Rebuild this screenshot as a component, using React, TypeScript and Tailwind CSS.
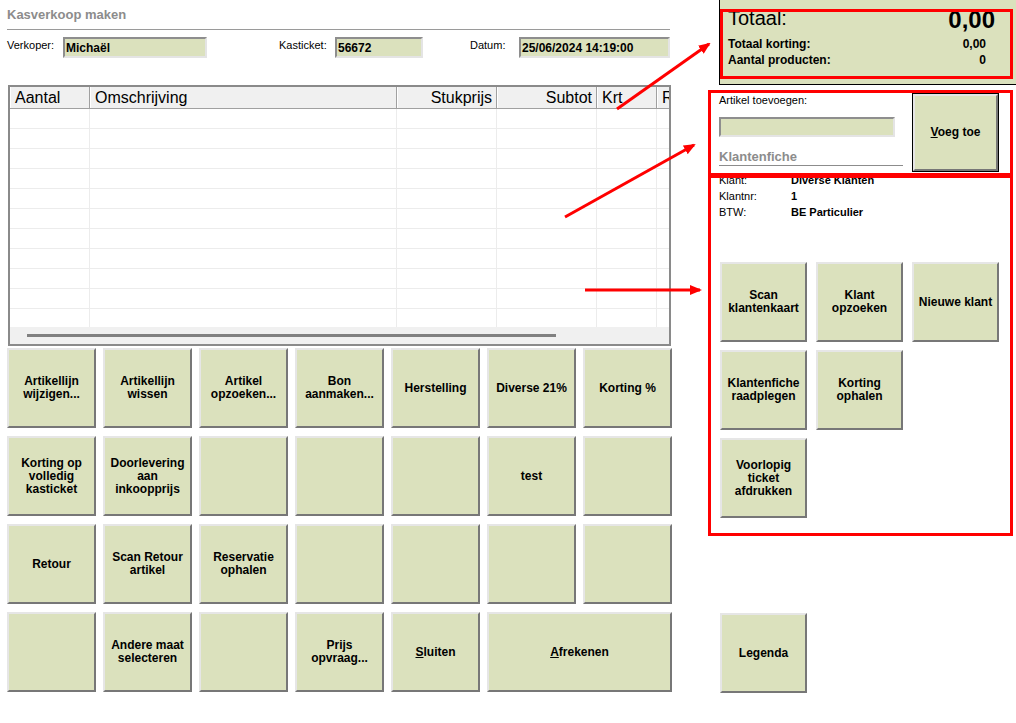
import React from 'react';

const font = "font-['Liberation_Sans','Arial',sans-serif]";

const bevel =
  'flex items-center justify-center text-center bg-[#dbe1bd] border-2 border-t-[#e6e6e6] border-l-[#e6e6e6] border-r-[#777777] border-b-[#777777] text-[12px] font-bold leading-[13px] text-black';

const sunken =
  'flex items-center bg-[#dbe1bd] border-2 border-t-[#8e8e8e] border-l-[#8e8e8e] border-r-[#e4e4e4] border-b-[#e4e4e4] text-[12px] font-bold text-black pl-[1px]';

type Btn = { label: React.ReactNode; span?: boolean };

const leftButtons: Btn[] = [
  { label: 'Artikellijn\nwijzigen...' },
  { label: 'Artikellijn\nwissen' },
  { label: 'Artikel\nopzoeken...' },
  { label: 'Bon\naanmaken...' },
  { label: 'Herstelling' },
  { label: 'Diverse 21%' },
  { label: 'Korting %' },
  { label: 'Korting op\nvolledig\nkasticket' },
  { label: 'Doorlevering\naan\ninkoopprijs' },
  { label: '' },
  { label: '' },
  { label: '' },
  { label: 'test' },
  { label: '' },
  { label: 'Retour' },
  { label: 'Scan Retour\nartikel' },
  { label: 'Reservatie\nophalen' },
  { label: '' },
  { label: '' },
  { label: '' },
  { label: '' },
  { label: '' },
  { label: 'Andere maat\nselecteren' },
  { label: '' },
  { label: 'Prijs\nopvraag...' },
  { label: <><span className="underline">S</span>luiten</> },
  { label: <><span className="underline">A</span>frekenen</>, span: true },
];

// null = empty slot in the grid
const rightButtons: (string | null)[] = [
  'Scan\nklantenkaart',
  'Klant\nopzoeken',
  'Nieuwe klant',
  'Klantenfiche\nraadplegen',
  'Korting\nophalen',
  null,
  'Voorlopig\nticket\nafdrukken',
];

const columns = [
  { name: 'Aantal', w: 'w-[80px]', align: 'justify-start pl-[4px]' },
  { name: 'Omschrijving', w: 'w-[307px]', align: 'justify-start pl-[4px]' },
  { name: 'Stukprijs', w: 'w-[100px]', align: 'justify-end pr-[4px]' },
  { name: 'Subtot', w: 'w-[100px]', align: 'justify-end pr-[4px]' },
  { name: 'Krt', w: 'w-[60px]', align: 'justify-start pl-[4px]' },
  { name: 'R', w: 'w-[100px]', align: 'justify-start pl-[4px]' },
];

function Grid() {
  return (
    <div className="mt-[27px] ml-[1px] w-[663px] h-[261px] border-2 border-[#8a8a8a] bg-white flex flex-col overflow-hidden">
      <div className="h-[22px] flex shrink-0 bg-[#f0f0f0] border-b border-[#a0a0a0]">
        {columns.map((c) => (
          <div
            key={c.name}
            className={`${c.w} shrink-0 flex items-end pb-[1px] ${c.align} border-l border-l-white border-r border-r-[#a0a0a0] text-[16px] leading-[18px] text-black`}
          >
            {c.name}
          </div>
        ))}
      </div>
      <div className="flex-1 overflow-hidden">
        {Array.from({ length: 11 }).map((_, i) => (
          <div key={i} className="h-[20px] flex border-b border-[#ececec]">
            {columns.map((c) => (
              <div key={c.name} className={`${c.w} shrink-0 border-r border-[#ececec]`} />
            ))}
          </div>
        ))}
      </div>
      <div className="h-[17px] shrink-0 bg-[#f0f0f0] flex items-center pl-[17px]">
        <div className="w-[529px] h-[3px] bg-[#808080]" />
      </div>
    </div>
  );
}

function Arrows() {
  return (
    <svg className="absolute inset-0 pointer-events-none" width="1016" height="723">
      <defs>
        <marker id="head" markerUnits="userSpaceOnUse" markerWidth="12" markerHeight="10" refX="10" refY="5" orient="auto" viewBox="0 0 12 10">
          <path d="M0,0 L12,5 L0,10 z" fill="#ff0000" />
        </marker>
      </defs>
      <line x1="617" y1="109" x2="709" y2="44" stroke="#ff0000" strokeWidth="3" markerEnd="url(#head)" />
      <line x1="565" y1="217" x2="694" y2="145" stroke="#ff0000" strokeWidth="3" markerEnd="url(#head)" />
      <line x1="585" y1="290" x2="700" y2="290" stroke="#ff0000" strokeWidth="3" markerEnd="url(#head)" />
    </svg>
  );
}

export default function App() {
  return (
    <div className={`${font} relative w-[1016px] h-[723px] bg-white overflow-hidden flex text-black`}>
      {/* left part */}
      <div className="w-[719px] shrink-0 pl-[7px] flex flex-col">
        <div className="pt-[7px] text-[13px] leading-[16px] font-bold text-[#8c8c8c]">Kasverkoop maken</div>
        <div className="mt-[6px] w-[663px] border-t border-[#9a9a9a]" />
        <div className="mt-[7px] flex h-[21px] text-[11px] leading-[14px]">
          <div className="w-[56px] pt-[1px]">Verkoper:</div>
          <div className={`${sunken} w-[144px]`}>Michaël</div>
          <div className="w-[72px]" />
          <div className="w-[56px] pt-[1px]">Kasticket:</div>
          <div className={`${sunken} w-[88px]`}>56672</div>
          <div className="w-[47px]" />
          <div className="w-[49px] pt-[1px]">Datum:</div>
          <div className={`${sunken} w-[151px]`}>25/06/2024 14:19:00</div>
        </div>
        <Grid />
        <div className="mt-[2px] grid grid-cols-[repeat(7,89px)] auto-rows-[80px] gap-x-[7px] gap-y-[8px]">
          {leftButtons.map((b, i) => (
            <div key={i} className={`${bevel} whitespace-pre-line ${b.span ? 'col-span-2' : ''}`}>
              {b.label}
            </div>
          ))}
        </div>
      </div>

      {/* right part */}
      <div className="w-[297px] shrink-0 flex flex-col">
        <div className="h-[85px] border-l border-b border-black bg-[#dbe1bd] pl-[8px] pt-[8px]">
          <div className="flex justify-between items-start pr-[21px] h-[26px]">
            <span className="text-[20px] leading-[20px]">Totaal:</span>
            <span className="text-[24px] leading-[24px] font-bold">0,00</span>
          </div>
          <div className="mt-[2px] flex justify-between pr-[30px] text-[12px] leading-[16px] font-bold">
            <span>Totaal korting:</span>
            <span>0,00</span>
          </div>
          <div className="flex justify-between pr-[30px] text-[12px] leading-[16px] font-bold">
            <span>Aantal producten:</span>
            <span>0</span>
          </div>
        </div>

        <div className="h-[87px] flex pt-[8px]">
          <div className="w-[184px] flex flex-col">
            <div className="text-[11px] leading-[14px]">Artikel toevoegen:</div>
            <div className={`${sunken} mt-[10px] w-[176px] h-[20px]`} />
            <div className="mt-[12px] text-[13px] leading-[16px] font-bold text-[#8c8c8c] border-b border-[#8c8c8c]">
              Klantenfiche
            </div>
          </div>
          <div className="ml-[9px] w-[87px] h-[79px] border border-black">
            <div className={`${bevel} w-full h-full`}>
              <span>
                <span className="underline">V</span>oeg toe
              </span>
            </div>
          </div>
        </div>

        <div className="text-[11px] leading-[16px]">
          <div className="flex">
            <span className="w-[72px]">Klant:</span>
            <span className="font-bold">Diverse Klanten</span>
          </div>
          <div className="flex">
            <span className="w-[72px]">Klantnr:</span>
            <span className="font-bold">1</span>
          </div>
          <div className="flex">
            <span className="w-[72px]">BTW:</span>
            <span className="font-bold">BE Particulier</span>
          </div>
        </div>

        <div className="mt-[42px] ml-[1px] grid grid-cols-[repeat(3,87px)] auto-rows-[80px] gap-x-[9px] gap-y-[8px]">
          {rightButtons.map((t, i) =>
            t === null ? (
              <div key={i} />
            ) : (
              <div key={i} className={`${bevel} whitespace-pre-line`}>
                {t}
              </div>
            )
          )}
        </div>

        <div className={`${bevel} mt-[95px] ml-[1px] w-[87px] h-[80px]`}>Legenda</div>
      </div>

      {/* annotations */}
      <div className="absolute left-[720px] top-[9px] w-[293px] h-[70px] border-[3px] border-[#ff0000]" />
      <div className="absolute left-[708px] top-[90px] w-[305px] h-[86px] border-[3px] border-[#ff0000]" />
      <div className="absolute left-[708px] top-[175px] w-[305px] h-[361px] border-[3px] border-[#ff0000]" />
      <Arrows />
    </div>
  );
}
